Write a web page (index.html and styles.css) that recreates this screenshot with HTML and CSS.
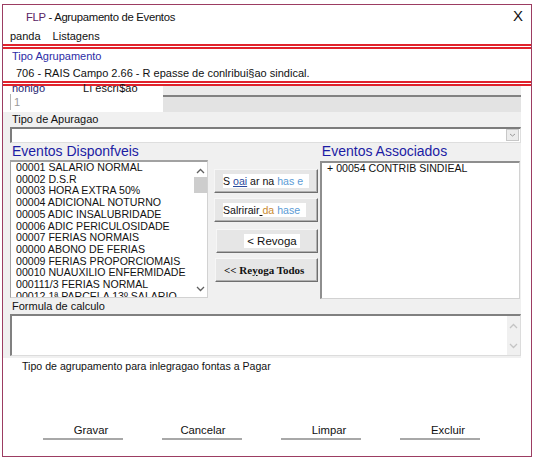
FILE: index.html
```html
<!DOCTYPE html>
<html lang="pt">

<head>
    <meta charset="UTF-8">
    <meta name="viewport" content="width=device-width, initial-scale=1.0">
    <title>FLP - Agrupamento de Eventos</title>
    <link rel="stylesheet" href="styles.css">
</head>

<body>
    <div class="janela">
        <!-- barra de titulo -->
        <div class="titulo">
            <span class="titulo-txt"><span class="flp">FLP</span> - Agrupamento de Eventos</span>
            <span class="fechar">X</span>
        </div>
        <div class="menu">
            <span>panda</span>
            <span>Listagens</span>
        </div>

        <div class="linha-dupla"></div>
        <div class="info">
            <p class="info-label">Tipo Agrupamento</p>
            <p class="info-valor">706 - RAIS Campo 2.66 - R epasse de conlribui§ao sindical.</p>
        </div>
        <div class="linha-dupla"></div>

        <div class="conteudo">
            <div class="linha-codigo">
                <div class="codigo">
                    <div class="codigo-labels">
                        <span class="lbl-codigo">nonigo</span>
                        <span class="lbl-desc">Lı escrı$ao</span>
                    </div>
                    <div class="codigo-campo">1</div>
                </div>
                <div class="descricao"></div>
            </div>

            <p class="rotulo">Tipo de Apuragao</p>
            <div class="combo">
                <span class="combo-btn">
                    <svg width="7" height="4" viewBox="0 0 7 4"><path d="M1 1 L3.5 3 L6 1" fill="none" stroke="#9a9a9a" stroke-width="1"/></svg>
                </span>
            </div>

            <div class="titulos-listas">
                <span class="titulo-lista">Eventos Disponfveis</span>
                <span class="titulo-lista assoc">Eventos Associados</span>
            </div>

            <div class="listas">
                <div class="lista disponiveis">
                    <ul>
                        <li>00001 SALARIO NORMAL</li>
                        <li>00002 D.S.R</li>
                        <li>00003 HORA EXTRA 50%</li>
                        <li>00004 ADICIONAL NOTURNO</li>
                        <li>00005 ADIC INSALUBRIDADE</li>
                        <li>00006 ADIC PERICULOSIDADE</li>
                        <li>00007 FERIAS NORMAIS</li>
                        <li>00000 ABONO DE FERIAS</li>
                        <li>00009 FERIAS PROPORCIOMAIS</li>
                        <li>00010 NUAUXILIO ENFERMIDADE</li>
                        <li>000111/3 FERIAS NORMAL</li>
                        <li class="parcial">00012 1ª PARCELA 13º SALARIO</li>
                    </ul>
                    <div class="rolagem">
                        <svg class="seta" width="9" height="6" viewBox="0 0 9 6"><path d="M1 5 L4.5 1.5 L8 5" fill="none" stroke="#606060" stroke-width="1.3"/></svg>
                        <div class="cursor"></div>
                        <svg class="seta baixo" width="9" height="6" viewBox="0 0 9 6"><path d="M1 1 L4.5 4.5 L8 1" fill="none" stroke="#606060" stroke-width="1.3"/></svg>
                    </div>
                </div>

                <div class="botoes">
                    <button class="btn"><span class="hl">S <u class="azul-esc">oai</u> ar na <span class="azul">has e</span>&nbsp;&nbsp;</span></button>
                    <button class="btn"><span class="hl">Salrirair<u>&nbsp;</u><span class="laranja">da</span> <span class="azul">hase</span>&nbsp;&nbsp;</span></button>
                    <button class="btn btn-revoga"><span class="hl">&nbsp;&lt; Revoga&nbsp;</span></button>
                    <button class="btn btn-todos">&lt;&lt; Re<u>y</u>oga Todos</button>
                </div>

                <div class="lista associados">
                    <ul>
                        <li>+ 00054 CONTRIB SINDIEAL</li>
                    </ul>
                </div>
            </div>

            <p class="rotulo formula-lbl">Formula de calculo</p>
            <div class="formula">
                <div class="formula-rolagem">
                    <svg width="9" height="6" viewBox="0 0 9 6"><path d="M1 5 L4.5 1.5 L8 5" fill="none" stroke="#c4c4c4" stroke-width="1.3"/></svg>
                    <svg width="9" height="6" viewBox="0 0 9 6"><path d="M1 1 L4.5 4.5 L8 1" fill="none" stroke="#c4c4c4" stroke-width="1.3"/></svg>
                </div>
            </div>
        </div>

        <p class="obs">Tipo de agrupamento para inlegragao fontas a Pagar</p>

        <div class="rodape">
            <span class="acao">Gravar</span>
            <span class="acao acao-cancelar">Cancelar</span>
            <span class="acao">Limpar</span>
            <span class="acao">Excluir</span>
        </div>
    </div>
</body>

</html>
```

FILE: styles.css
```css
* {
    margin: 0;
    padding: 0;
    box-sizing: border-box;
}

body {
    background: #fff;
    font-family: "Liberation Sans", Arial, sans-serif;
    font-size: 11px;
    color: #111;
}

ul {
    list-style: none;
}

.janela {
    width: 530px;
    height: 453px;
    margin: 4px 0 0 2px;
    border: 1px solid #9c3d62;
}

/* titulo + menu */
.titulo {
    height: 24px;
    display: flex;
    justify-content: space-between;
    align-items: center;
    padding: 0 8px 0 23px;
}

.titulo-txt {
    font-size: 11.3px;
    letter-spacing: -0.3px;
}

.flp {
    color: #5a2464;
}

.fechar {
    font-size: 15px;
    line-height: 15px;
    margin-top: -3px;
}

.menu {
    height: 14px;
    line-height: 14px;
    padding-left: 7px;
    display: flex;
    gap: 12px;
}

.linha-dupla {
    height: 5px;
    margin-top: 1px;
    border-top: 2px solid #e0222c;
    border-bottom: 2px solid #e0222c;
}

.info {
    height: 31px;
    padding-left: 9px;
}

.info-label {
    line-height: 15px;
    color: #2c2ca6;
}

.info-valor {
    line-height: 14px;
    margin-top: 2px;
    padding-left: 4px;
}

/* area cinza */
.conteudo {
    width: 518px;
    background: #f0f0f0;
    padding-bottom: 2px;
}

.linha-codigo {
    display: flex;
    height: 26px;
}

.codigo {
    width: 160px;
    background: #fff;
    padding-left: 7px;
}

.codigo-labels {
    height: 8px;
    line-height: 10px;
    margin-top: -3px;
}

.lbl-codigo {
    color: #1e2470;
    padding-left: 2px;
}

.lbl-desc {
    margin-left: 35px;
}

.codigo-campo {
    margin-top: 3px;
    height: 16px;
    line-height: 16px;
    border-left: 1px solid #b4b4b4;
    padding-left: 3px;
    color: #999;
}

.descricao {
    flex: 1;
    background: #e3e3e3;
    border-top: 9px solid #ebebeb;
    box-shadow: inset 0 2px #828282;
}

.rotulo {
    height: 15px;
    line-height: 15px;
    padding-left: 9px;
}

.combo {
    margin-left: 7px;
    height: 16px;
    background: #fff;
    border-top: 2px solid #7c7c7c;
    border-left: 2px solid #7c7c7c;
    border-right: 1px solid #dedede;
    border-bottom: 1px solid #dedede;
    display: flex;
    justify-content: flex-end;
    padding-right: 1px;
}

.combo-btn {
    width: 13px;
    height: 12px;
    border: 1px solid #c8c8c8;
    background: #ececec;
    display: flex;
    align-items: center;
    justify-content: center;
}

.titulos-listas {
    height: 17px;
    line-height: 17px;
    display: flex;
}

.titulo-lista {
    font-size: 14px;
    color: #1c1ca4;
    padding-left: 9px;
}

.titulo-lista.assoc {
    padding-left: 183px;
}

/* listas */
.listas {
    display: flex;
    height: 139px;
    padding-left: 7px;
}

.lista {
    background: #fff;
    border: 1px solid #d2d2d2;
    border-top: 2px solid #a2a2a2;
    border-left: 1px solid #a2a2a2;
    overflow: hidden;
}

.disponiveis {
    width: 198px;
    height: 138px;
    display: flex;
}

.disponiveis ul {
    flex: 1;
    padding: 0 0 0 5px;
    font-size: 10.6px;
    line-height: 11.7px;
}

.disponiveis .parcial {
    height: 6px;
    overflow: hidden;
}

.rolagem {
    width: 14px;
    display: flex;
    flex-direction: column;
    align-items: center;
    padding-top: 6px;
}

.cursor {
    width: 13px;
    height: 16px;
    background: #cdcdcd;
    margin-top: 3px;
}

.seta.baixo {
    margin-top: auto;
    margin-bottom: 5px;
}

.botoes {
    width: 112px;
    display: flex;
    flex-direction: column;
    padding: 9px 2px 0 6px;
    gap: 5px;
}

.btn {
    height: 24px;
    width: 104px;
    background: #e6e6e6;
    border: 1px solid;
    border-color: #f6f6f6 #6f6f6f #6f6f6f #f6f6f6;
    box-shadow: inset -1px -1px #b0b0b0;
    font-family: "Liberation Sans", Arial, sans-serif;
    font-size: 10.6px;
    color: #111;
    text-align: left;
    padding-left: 8px;
}

.hl {
    background: #fff;
    padding: 1px 0;
}

.azul-esc {
    color: #2b4a9c;
}

.azul {
    color: #5b9bd5;
}

.laranja {
    color: #c98a30;
}

.btn-revoga {
    width: 102px;
    margin-left: 2px;
    margin-top: 2px;
    padding-left: 27px;
    font-size: 11.5px;
}

.btn-todos {
    width: 103px;
    margin-left: 1px;
    font-family: "Liberation Serif", "Times New Roman", serif;
    font-weight: bold;
    font-size: 11px;
    padding-left: 8px;
}

.associados {
    width: 200px;
    height: 138px;
    margin-top: 1px;
    border-top: 2px solid #8e8e8e;
    border-left: 2px solid #8e8e8e;
}

.associados ul {
    padding-left: 5px;
    font-size: 10.6px;
    line-height: 11.7px;
}

.formula-lbl {
    height: 15px;
    line-height: 14px;
}

.formula {
    margin-left: 7px;
    height: 42px;
    background: #fff;
    border-top: 2px solid #808080;
    border-left: 2px solid #808080;
    border-right: 1px solid #dcdcdc;
    border-bottom: 1px solid #dcdcdc;
    display: flex;
    justify-content: flex-end;
}

.formula-rolagem {
    width: 13px;
    background: #f0f0f0;
    display: flex;
    flex-direction: column;
    align-items: center;
    justify-content: space-between;
    padding: 7px 0 6px;
}

.obs {
    font-size: 10.6px;
    line-height: 14px;
    padding: 1px 0 0 19px;
}

/* botoes de baixo */
.rodape {
    display: flex;
    gap: 39px;
    padding-left: 40px;
    margin-top: 49px;
}

.acao {
    width: 80px;
    height: 18px;
    line-height: 16px;
    font-size: 11.3px;
    text-align: center;
    padding-left: 16px;
    border-bottom: 2px solid #a8a8a8;
}

.acao-cancelar {
    padding-left: 2px;
}
```
